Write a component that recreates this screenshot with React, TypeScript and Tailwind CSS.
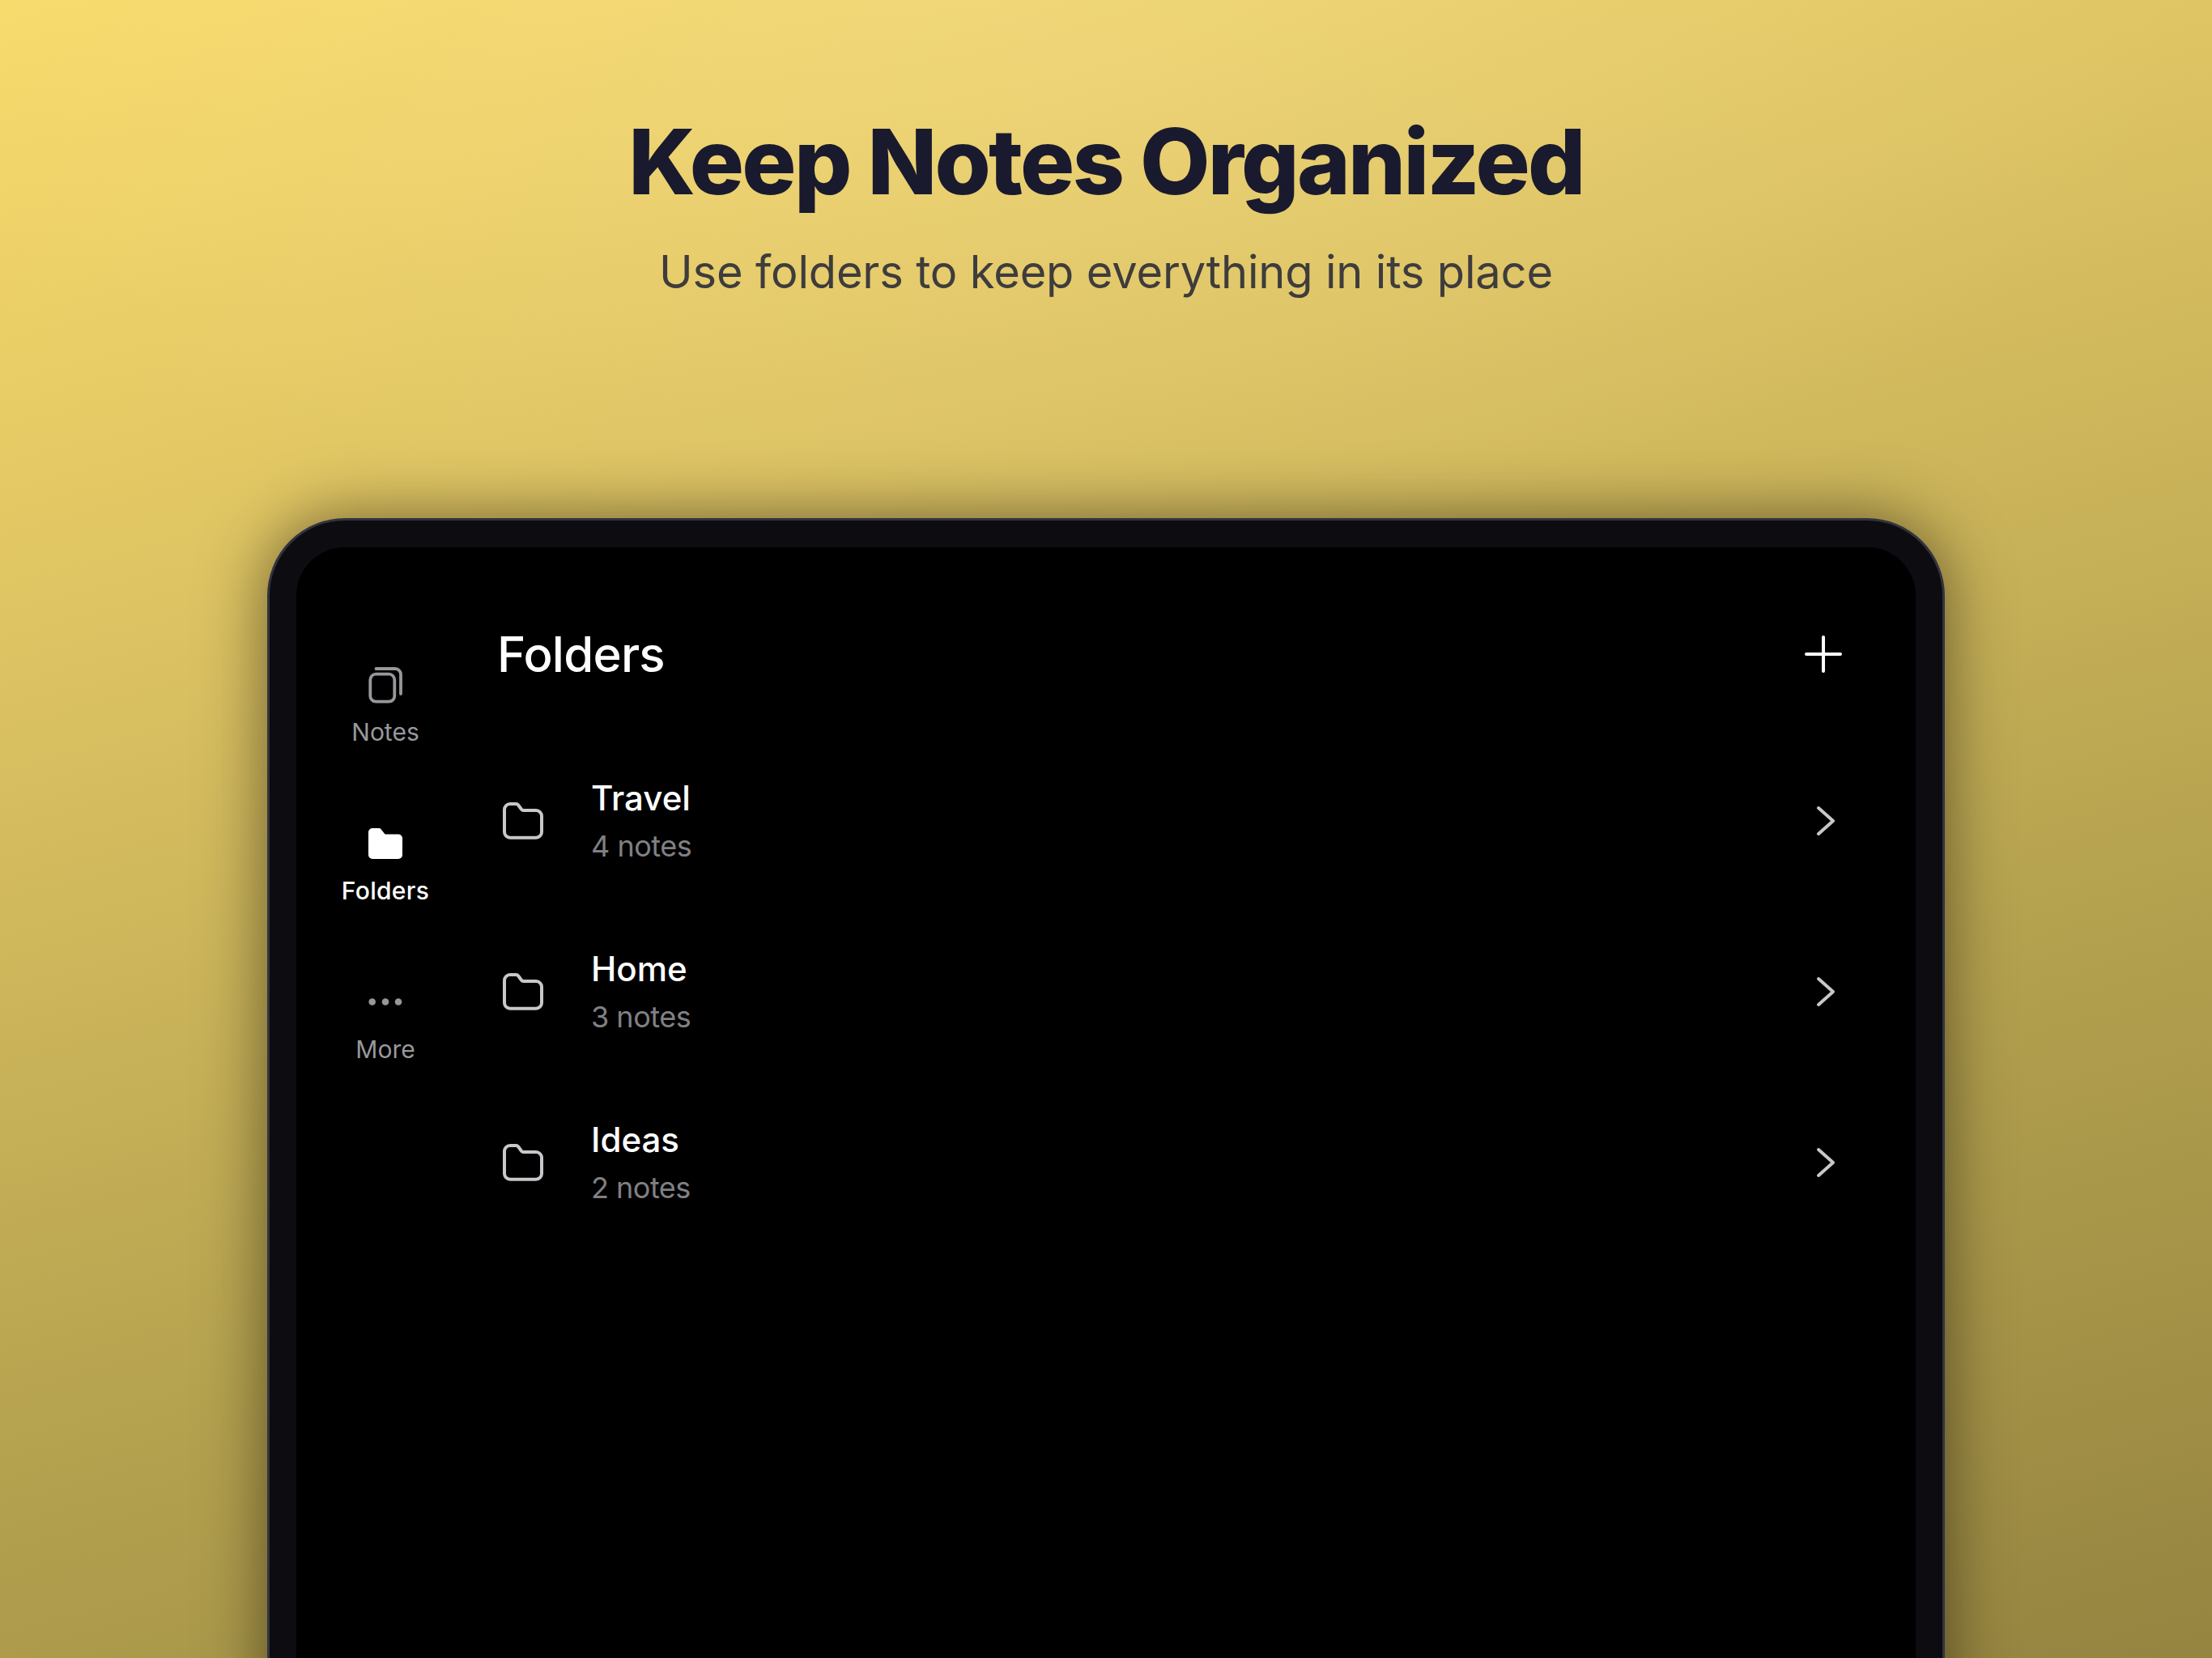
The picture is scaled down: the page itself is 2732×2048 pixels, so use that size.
const folders = [
  { name: 'Travel', count: '4 notes' },
  { name: 'Home', count: '3 notes' },
  { name: 'Ideas', count: '2 notes' },
];

const NotesIcon = () => (
  <svg width="64" height="64" viewBox="-1 0 64 64" fill="none" stroke="#98989c" strokeWidth="3.8" strokeLinecap="round">
    <rect x="12.3" y="17.7" width="30" height="34" rx="7" />
    <path d="M19.5 11H43a7 7 0 0 1 7 7v24" />
  </svg>
);

const FolderFilled = () => (
  <svg width="64" height="64" viewBox="-1 0 64 64" fill="#fff">
    <path d="M15 12h8a3.5 3.5 0 0 1 2.8 1.4l4.7 6.1H47a5 5 0 0 1 5 5V45a5 5 0 0 1-5 5H15a5 5 0 0 1-5-5V17a5 5 0 0 1 5-5Z" />
  </svg>
);

const MoreIcon = () => (
  <svg width="64" height="64" viewBox="0 0 64 64" fill="#98989c">
    <circle cx="15.7" cy="30.5" r="4.3" />
    <circle cx="32" cy="30.5" r="4.3" />
    <circle cx="48" cy="30.5" r="4.3" />
  </svg>
);

const FolderOutline = () => (
  <svg width="62" height="64" viewBox="3 0 62 64" fill="none" stroke="#c8c8cc" strokeWidth="4" strokeLinejoin="round" className="shrink-0">
    <path d="M18 11h7.5a3 3 0 0 1 2.5 1.3l4 5.4a3 3 0 0 0 2.5 1.3H50a7 7 0 0 1 7 7v19.7a7 7 0 0 1-7 7H18a7 7 0 0 1-7-7V18a7 7 0 0 1 7-7Z" />
  </svg>
);

const Chevron = () => (
  <svg width="56" height="64" viewBox="0 0 56 64" fill="none" stroke="#c8c8cc" strokeWidth="4" strokeLinecap="round" strokeLinejoin="round" className="shrink-0">
    <path d="M22 16 40 32 22 48" />
  </svg>
);

const PlusIcon = () => (
  <svg width="56" height="56" viewBox="0 0 56 56" fill="none" stroke="#fff" strokeWidth="4" strokeLinecap="round">
    <path d="M28 7v42M7 28h42" />
  </svg>
);

function NavItem({ icon, label, active }: { icon: React.ReactNode; label: string; active?: boolean }) {
  return (
    <div className="flex flex-col items-center gap-[7px]">
      {icon}
      <span className={active ? 'text-[30px] leading-[36px] font-medium tracking-[0.3px] text-white' : 'text-[30px] leading-[36px] text-[#98989c]'}>
        {label}
      </span>
    </div>
  );
}

export default function App() {
  return (
    <div className="w-[2732px] h-[2048px] overflow-hidden flex flex-col items-center font-['Inter',sans-serif] bg-[radial-gradient(ellipse_1500px_700px_at_45%_0%,rgba(255,240,190,0.2),transparent),linear-gradient(165deg,#f8da6a_0%,#dcc262_30%,#b5a24f_65%,#958440_100%)]">
      <h1 className="mt-[131px] text-[112px] leading-[136px] font-extrabold tracking-[-2.7px] text-[#1a1a2e]">
        Keep Notes Organized
      </h1>
      <p className="mt-[35px] text-[56px] leading-[68px] tracking-[-0.17px] text-[#3e3c3c]">
        Use folders to keep everything in its place
      </p>

      <div className="mt-[270px] w-[2072px] h-[1600px] shrink-0 rounded-[96px] border-[3px] border-[#33333f] bg-[#0c0c11] p-[33px] shadow-[0_0_80px_rgba(0,0,0,0.5)]">
        <div className="h-full rounded-[60px] bg-black flex">
          <nav className="w-[220px] shrink-0 pt-[139px] flex flex-col gap-[89px]">
            <NavItem icon={<NotesIcon />} label="Notes" />
            <NavItem icon={<FolderFilled />} label="Folders" active />
            <NavItem icon={<MoreIcon />} label="More" />
          </nav>

          <main className="flex-1 pl-[29px] pr-[86px]">
            <header className="mt-[96px] flex items-center justify-between">
              <h2 className="text-[60px] leading-[72px] font-medium tracking-[-0.8px] -ml-[1px] text-white">Folders</h2>
              <PlusIcon />
            </header>
            <ul className="mt-[110px] flex flex-col gap-[91px]">
              {folders.map((f) => (
                <li key={f.name} className="flex items-center gap-[53px] h-[120px]">
                  <FolderOutline />
                  <div className="flex-1">
                    <div className="text-[42px] leading-[50px] font-medium text-white">{f.name}</div>
                    <div className="mt-[12px] text-[36px] leading-[44px] tracking-[-0.5px] text-[#808084]">{f.count}</div>
                  </div>
                  <Chevron />
                </li>
              ))}
            </ul>
          </main>
        </div>
      </div>
    </div>
  );
}
